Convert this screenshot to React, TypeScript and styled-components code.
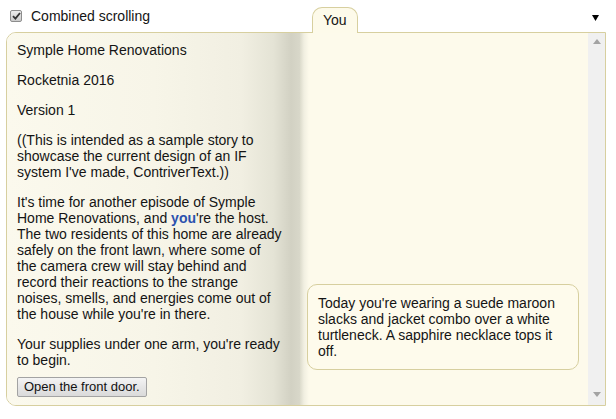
import React from "react";
import styled, { createGlobalStyle } from "styled-components";

const Global = createGlobalStyle`
  html, body { margin: 0; padding: 0; background: #ffffff; }
  body {
    font-family: "Liberation Sans", Arial, sans-serif;
    font-size: 14px;
    color: #141414;
  }
  * { box-sizing: border-box; }
`;

const TAN = "#d7cf9f";

const Container = styled.div`
  margin-left: 6px;
  width: 600px;
`;

const Header = styled.div`
  height: 32px;
  display: flex;
  align-items: flex-end;
`;

const HeaderLeft = styled.div`
  width: 306px;
  align-self: flex-start;
  display: flex;
  align-items: center;
  padding: 9px 0 0 4px;
`;

const CheckBox = styled.span`
  width: 12px;
  height: 12px;
  border: 1px solid #8d8d8d;
  border-radius: 2px;
  background: linear-gradient(#ececec, #cbcbcb);
  display: flex;
  align-items: center;
  justify-content: center;
`;

const CheckText = styled.span`
  margin-left: 9px;
  line-height: 14px;
  color: #141414;
`;

const Tab = styled.div`
  position: relative;
  z-index: 1;
  height: 26px;
  margin-bottom: -1px;
  padding: 4px 10px 0;
  border: 1px solid ${TAN};
  border-bottom: none;
  border-radius: 10px 10px 0 0;
  background: #fdfaea;
  line-height: 16px;
`;

const Spacer = styled.div`
  flex: 1;
`;

const MenuArrow = styled.div`
  align-self: flex-start;
  margin: 15px 7px 0 0;
  display: flex;
`;

const Frame = styled.div`
  height: 374px;
  border: 1px solid ${TAN};
  border-radius: 10px 0 0 10px;
  display: flex;
  overflow: hidden;
`;

const LeftPane = styled.div`
  width: 293px;
  flex: none;
  padding: 9px 17px 5px 10px;
  background: linear-gradient(
    to right,
    #fbf9ed 0%,
    #f7f5e8 50%,
    #f1efe2 80%,
    #e4e3d5 91%,
    #d2d1c3 97%,
    #d9d8ca 100%
  );
`;

const Para = styled.p<{ $gap?: number }>`
  margin: 0 0 ${(p) => (p.$gap ?? 14)}px;
  line-height: 16px;
`;

const You = styled.b`
  color: #2b51ae;
`;

const ActionButton = styled.button`
  display: block;
  height: 20px;
  padding: 0 6px;
  border: 1px solid #a3a3a3;
  border-radius: 2px;
  background: linear-gradient(#f4f4f4, #e6e6e6 50%, #dadada);
  font-family: "Liberation Sans", Arial, sans-serif;
  font-size: 13px;
  color: #111;
  line-height: 16px;
`;

const RightPane = styled.div`
  flex: 1;
  display: flex;
  flex-direction: column;
  justify-content: flex-end;
  padding: 0 9px 35px 7px;
  background: linear-gradient(
    to right,
    #dcdbcc 0px,
    #f1efe1 4px,
    #fdfaeb 9px,
    #fdfaeb 100%
  );
`;

const Bubble = styled.div`
  border: 1px solid ${TAN};
  border-radius: 10px;
  padding: 10px;
  background: #fefbec;
  line-height: 16px;
`;

const ScrollBar = styled.div`
  width: 17px;
  flex: none;
  background: #f0f0f0;
  display: flex;
  flex-direction: column;
  justify-content: space-between;
  align-items: center;
  padding: 6px 0 8px;
`;

const Arrow = ({ down }: { down?: boolean }) => (
  <svg width="8" height="5" viewBox="0 0 8 5">
    <polygon
      points={down ? "0,0 8,0 4,5" : "4,0 8,5 0,5"}
      fill="#a3a3a3"
    />
  </svg>
);

export default function App() {
  return (
    <>
      <Global />
      <Container>
        <Header>
          <HeaderLeft>
            <CheckBox>
              <svg width="9" height="8" viewBox="0 0 9 8">
                <path
                  d="M1 4.2 L3.4 6.6 L8 1"
                  stroke="#333"
                  strokeWidth="1.8"
                  fill="none"
                />
              </svg>
            </CheckBox>
            <CheckText>Combined scrolling</CheckText>
          </HeaderLeft>
          <Tab>You</Tab>
          <Spacer />
          <MenuArrow>
            <svg width="7" height="6" viewBox="0 0 7 6">
              <polygon points="0,0 7,0 3.5,6" fill="#000" />
            </svg>
          </MenuArrow>
        </Header>
        <Frame>
          <LeftPane>
            <Para>Symple Home Renovations</Para>
            <Para>Rocketnia 2016</Para>
            <Para>Version 1</Para>
            <Para>
              ((This is intended as a sample story to showcase the current
              design of an IF system I've made, ContriverText.))
            </Para>
            <Para>
              It's time for another episode of Symple Home Renovations, and{" "}
              <You>you</You>'re the host. The two residents of this home are
              already safely on the front lawn, where some of the camera crew
              will stay behind and record their reactions to the strange
              noises, smells, and energies come out of the house while you're
              in there.
            </Para>
            <Para $gap={9}>
              Your supplies under one arm, you're ready to begin.
            </Para>
            <ActionButton>Open the front door.</ActionButton>
          </LeftPane>
          <RightPane>
            <Bubble>
              Today you're wearing a suede maroon slacks and jacket combo over
              a white turtleneck. A sapphire necklace tops it off.
            </Bubble>
          </RightPane>
          <ScrollBar>
            <Arrow />
            <Arrow down />
          </ScrollBar>
        </Frame>
      </Container>
    </>
  );
}
